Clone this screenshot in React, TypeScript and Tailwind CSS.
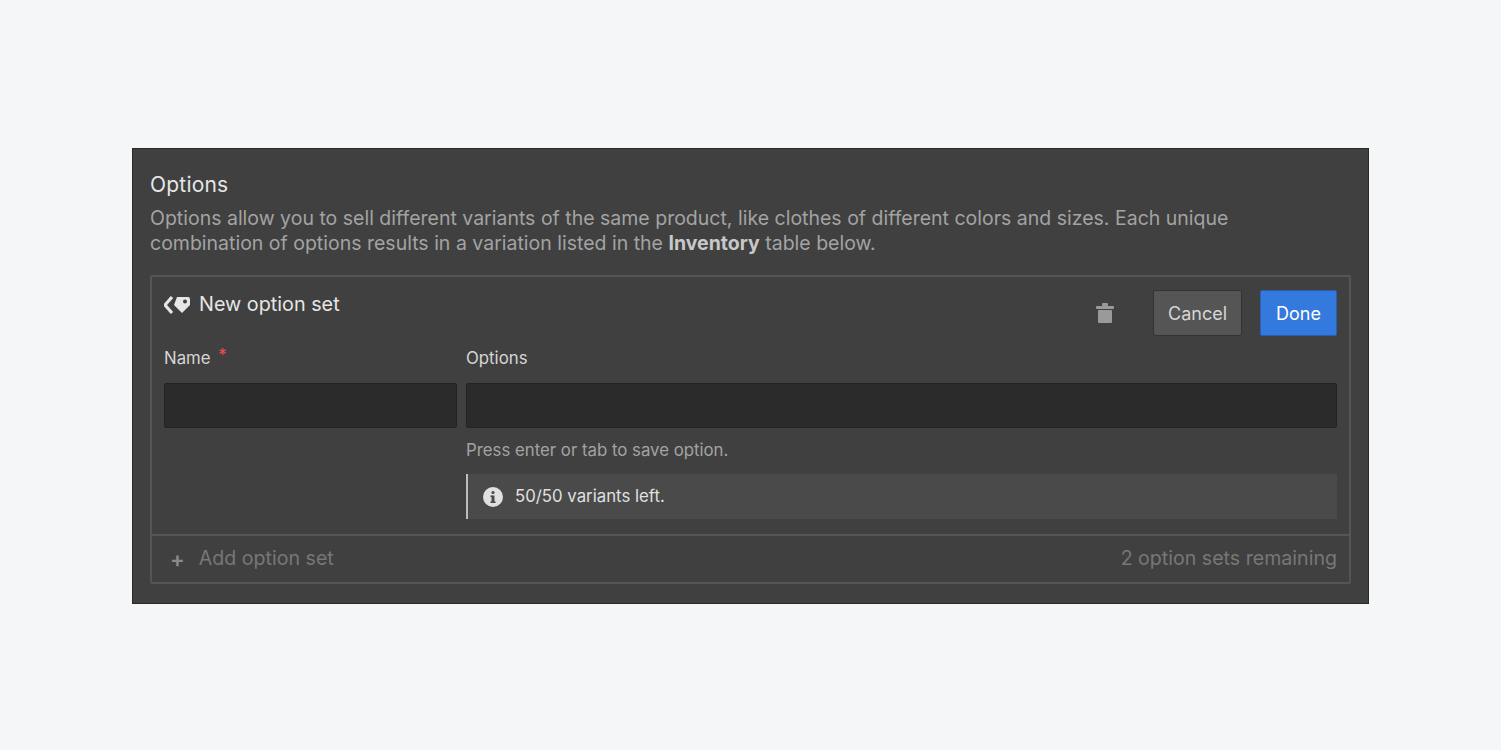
export default function App() {
  return (
    <div className="min-h-[750px] w-full bg-[#f5f6f8] pt-[148px] pl-[132px]" style={{ fontFamily: "Inter, 'Noto Sans', sans-serif" }}>
      <div className="w-[1237px] h-[456px] bg-[#404040] border border-[#2a2a2a] px-[17px] pt-[20px]">
        <div className="text-[21px] leading-[32px] text-[#e6e6e6] tracking-[0.2px]">Options</div>
        <div className="text-[19.5px] leading-[25px] text-[#a3a3a3] mt-[5px] pr-[100px]">
          Options allow you to sell different variants of the same product, like clothes of different colors and sizes. Each unique combination of options results in a variation listed in the <span className="font-bold text-[#c8c8c8]">Inventory</span> table below.
        </div>
        <div className="mt-[19px] border-2 border-[#555555] rounded-[2px]">
          <div className="px-[12px] pt-[12px] pb-[15px]">
            <div className="flex items-start">
              <div className="flex items-center gap-[8px] text-[19.8px] text-[#e6e6e6] flex-1 pt-[1px]">
                <svg width="27" height="20" viewBox="0 0 27 20">
                  <path d="M8 2 L1 10 L8 18" stroke="#e6e6e6" strokeWidth="3.2" fill="none" strokeLinejoin="round" />
                  <path d="M13 2 H24 a2 2 0 0 1 2 2 V10 L18 18 L10 10 Z" fill="#e6e6e6" />
                  <circle cx="21" cy="6.5" r="2" fill="#404040" />
                </svg>
                <span>New option set</span>
              </div>
              <div className="flex items-center mt-[1px]">
                <svg width="20" height="22" viewBox="0 0 20 22" className="mr-[38px]">
                  <rect x="7" y="1" width="6" height="3" rx="1" fill="#9a9a9a" />
                  <rect x="1" y="4" width="18" height="3" rx="1" fill="#9a9a9a" />
                  <rect x="3" y="8" width="14" height="13" rx="1" fill="#9a9a9a" />
                </svg>
                <button className="w-[89px] h-[46px] bg-[#555555] border border-[#333] rounded-[2px] text-[18px] text-[#d6d6d6]">Cancel</button>
                <button className="ml-[18px] w-[77px] h-[46px] bg-[#3479dd] border border-[#2a5fae] rounded-[2px] text-[18px] text-white">Done</button>
              </div>
            </div>
            <div className="flex gap-[9px] mt-[10px]">
              <div className="w-[293px]">
                <div className="text-[16.8px] text-[#d6d6d6] h-[26px]">Name <span className="text-[#ef4d4d] ml-[3px] relative -top-[3px]">*</span></div>
                <div className="mt-[11px] h-[45px] bg-[#2b2b2b] border border-[#232323] rounded-[2px]" />
              </div>
              <div className="flex-1">
                <div className="text-[16.8px] text-[#d6d6d6] h-[26px]">Options</div>
                <div className="mt-[11px] h-[45px] bg-[#2b2b2b] border border-[#232323] rounded-[2px]" />
                <div className="mt-[10px] text-[16.8px] text-[#a3a3a3] leading-[24px]">Press enter or tab to save option.</div>
                <div className="mt-[12px] h-[45px] bg-[#4a4a4a] border-l-2 border-[#bdbdbd] flex items-center pl-[15px] gap-[12px] text-[16.8px] text-[#e0e0e0]">
                  <svg width="20" height="20" viewBox="0 0 20 20">
                    <circle cx="10" cy="10" r="10" fill="#e0e0e0" />
                    <circle cx="10" cy="5.5" r="1.6" fill="#4a4a4a" />
                    <rect x="8.5" y="8.5" width="3" height="7.5" fill="#4a4a4a" />
                    <rect x="7.5" y="8.5" width="2" height="1.6" fill="#4a4a4a" />
                    <rect x="7.5" y="14.4" width="5" height="1.6" fill="#4a4a4a" />
                  </svg>
                  <span>50/50 variants left.</span>
                </div>
              </div>
            </div>
          </div>
          <div className="border-t-2 border-[#555555] h-[48px] flex items-center px-[18px] text-[19.6px] text-[#777777]">
            <span className="text-[22px] mr-[14px] text-[#8a8a8a] font-semibold">+</span>
            <span className="flex-1">Add option set</span>
            <span className="mr-[-6px]">2 option sets remaining</span>
          </div>
        </div>
      </div>
    </div>
  );
}
